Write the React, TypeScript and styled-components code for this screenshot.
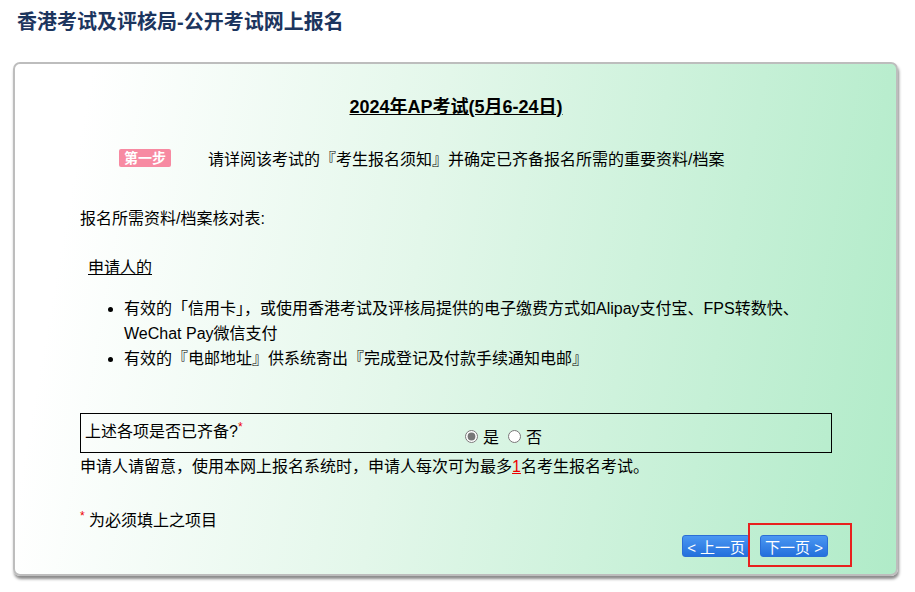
import styled, { createGlobalStyle } from 'styled-components';

const Global = createGlobalStyle`
  body {
    margin: 0;
    font-family: "Liberation Sans", "Noto Sans CJK SC", sans-serif;
    background: #fff;
    color: #000;
  }
`;

const Page = styled.div`
  width: 915px;
  height: 592px;
  padding: 8px 13px 0 13px;
  box-sizing: border-box;
`;

const SiteTitle = styled.h1`
  margin: 0 0 0 4px;
  font-size: 20px;
  line-height: 28px;
  font-weight: bold;
  color: #1c355e;
`;

const Panel = styled.div`
  margin-top: 26px;
  width: 885px;
  height: 514px;
  box-sizing: border-box;
  border: 2px solid #bdbdbd;
  border-radius: 7px;
  background: linear-gradient(100deg, #ffffff 8%, #e3f7ea 45%, #b0ebc8 100%);
  box-shadow: 1px 3px 3px #8a8a8a;
  padding: 31px 0 0 65px;
  font-size: 16px;
  position: relative;
`;

const Heading = styled.div`
  width: 752px;
  text-align: center;
  font-weight: bold;
  font-size: 18px;
  text-decoration: underline;
  line-height: 24px;
`;

const StepRow = styled.div`
  display: flex;
  align-items: center;
  margin: 27px 0 0 39px;
  gap: 37px;
`;

const Badge = styled.span`
  background: #f78aa2;
  color: #fff;
  font-weight: bold;
  font-size: 14px;
  padding: 0 5px;
  line-height: 18px;
  border-radius: 2px;
`;

const Text = styled.div<{ $top: number; $left?: number }>`
  margin-top: ${(p) => p.$top}px;
  margin-left: ${(p) => p.$left ?? 0}px;
  line-height: 22px;
`;

const Under = styled.span`
  text-decoration: underline;
`;

const List = styled.ul`
  margin: 17px 0 0 0;
  padding-left: 44px;
  width: 700px;
  line-height: 25px;
`;

const Box = styled.div`
  margin-top: 42px;
  width: 752px;
  height: 40px;
  box-sizing: border-box;
  border: 1px solid #000;
  display: flex;
  padding: 2px 4px;
`;

const Label = styled.div`
  width: 380px;
  line-height: 22px;
`;

const Star = styled.sup`
  color: #e00;
  font-size: 12px;
`;

const Radios = styled.div`
  display: flex;
  align-items: center;
  gap: 3px;
  margin-top: 6px;
  input { margin: 0 2px 0 0; width: 13px; height: 13px; accent-color: #777; }
`;

const Red1 = styled.span`
  color: #e00;
  text-decoration: underline;
`;

const Buttons = styled.div`
  position: absolute;
  right: 68px;
  bottom: 17px;
  display: flex;
  gap: 10px;
`;

const Btn = styled.button`
  height: 22px;
  border: 1px solid #2b6ed6;
  border-radius: 3px;
  background: linear-gradient(#4a97f2, #2470dc);
  color: #fff;
  font-family: inherit;
  font-size: 15px;
  padding: 0 4px;
  display: flex;
  align-items: center;
  gap: 6px;
`;

const Frame = styled.div`
  position: absolute;
  right: 44px;
  bottom: 7px;
  width: 100px;
  height: 40px;
  border: 2px solid #e8201e;
`;

export default function App() {
  return (
    <Page>
      <Global />
      <SiteTitle>香港考试及评核局-公开考试网上报名</SiteTitle>
      <Panel>
        <Heading>2024年AP考试(5月6-24日)</Heading>
        <StepRow>
          <Badge>第一步</Badge>
          <span>请详阅该考试的『考生报名须知』并确定已齐备报名所需的重要资料/档案</span>
        </StepRow>
        <Text $top={38}>报名所需资料/档案核对表:</Text>
        <Text $top={27} $left={8}><Under>申请人的</Under></Text>
        <List>
          <li>有效的「信用卡」，或使用香港考试及评核局提供的电子缴费方式如Alipay支付宝、FPS转数快、WeChat Pay微信支付</li>
          <li>有效的『电邮地址』供系统寄出『完成登记及付款手续通知电邮』</li>
        </List>
        <Box>
          <Label>上述各项是否已齐备?<Star>*</Star></Label>
          <Radios>
            <input type="radio" name="r" defaultChecked />是
            <input type="radio" name="r" style={{ marginLeft: 6 }} />否
          </Radios>
        </Box>
        <Text $top={3}>申请人请留意，使用本网上报名系统时，申请人每次可为最多<Red1>1</Red1>名考生报名考试。</Text>
        <Text $top={27}><Star>*</Star> 为必须填上之项目</Text>
        <Buttons>
          <Btn>&lt; 上一页</Btn>
          <Btn>下一页 &gt;</Btn>
        </Buttons>
        <Frame />
      </Panel>
    </Page>
  );
}
